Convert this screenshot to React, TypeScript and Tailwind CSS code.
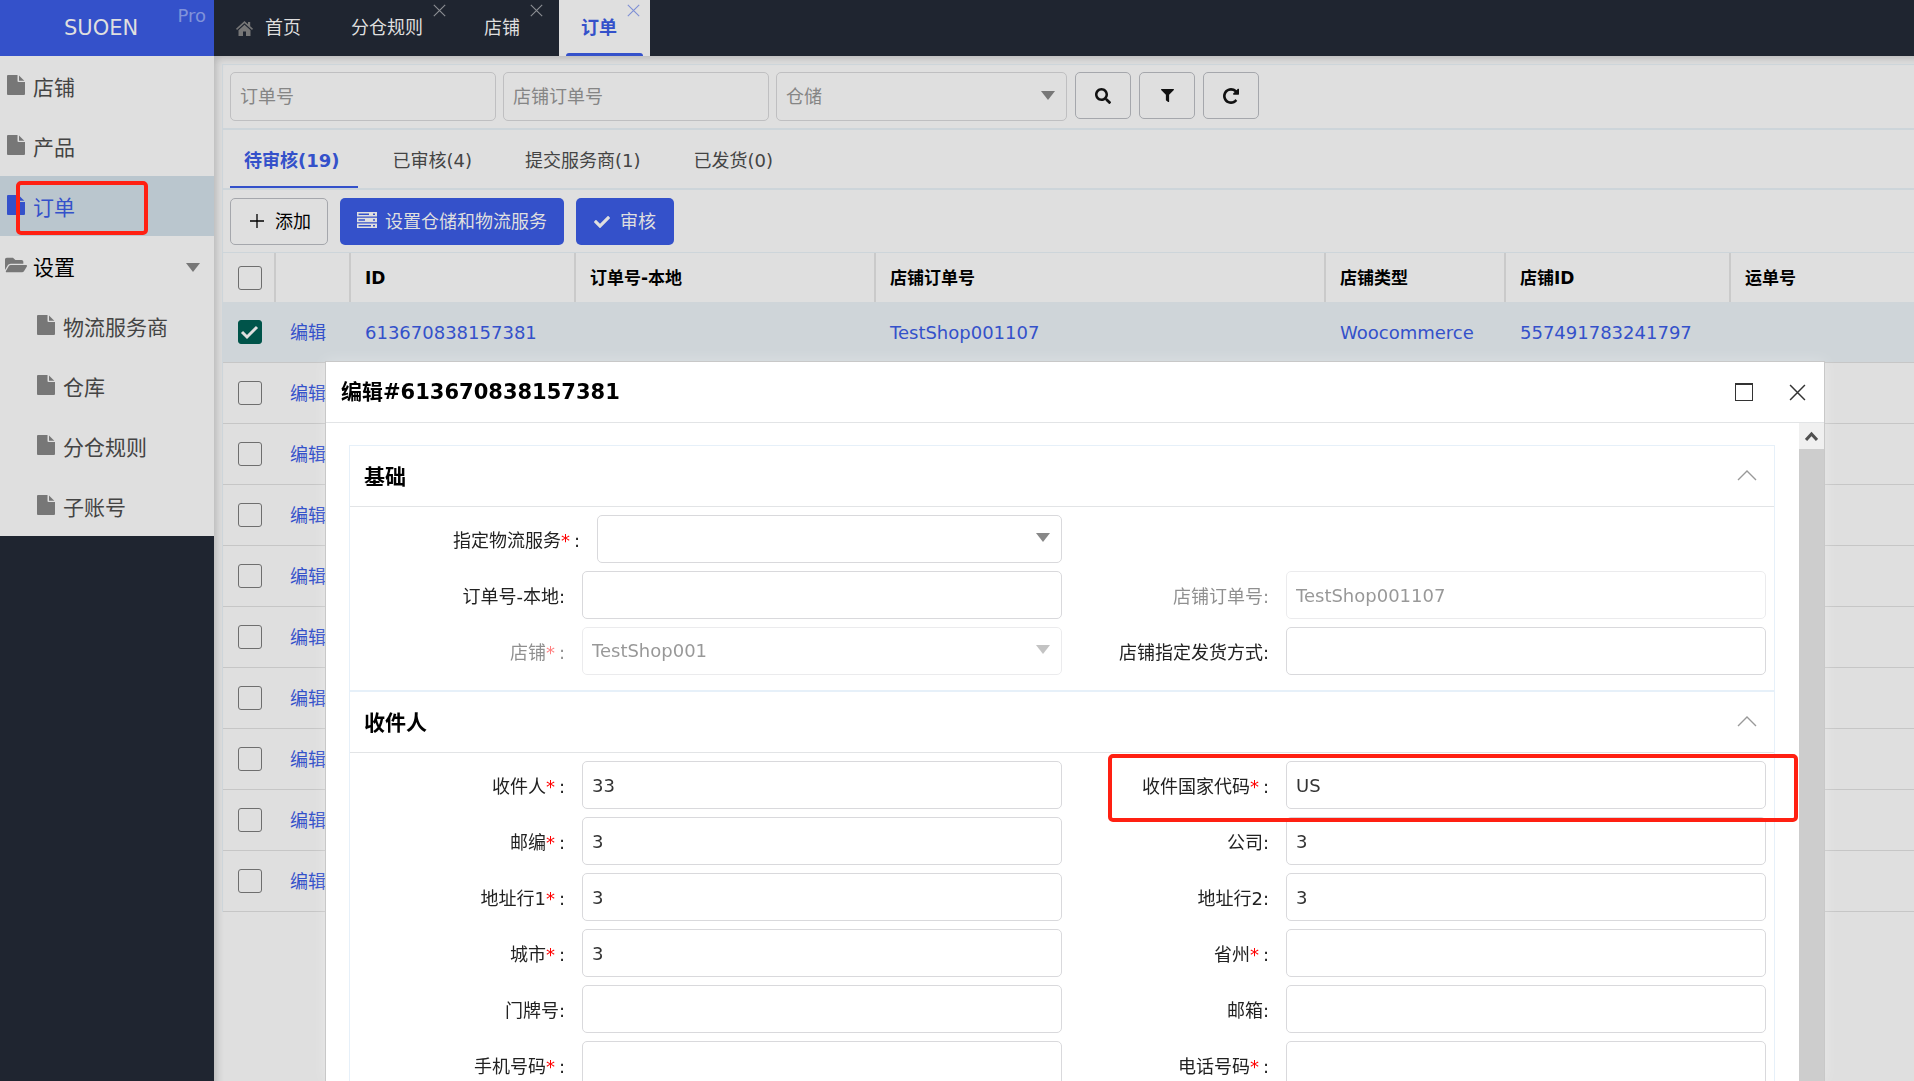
import React from "react";
import { FaFolderOpen, FaSearch, FaFilter, FaCheck } from "react-icons/fa";

const FileIcon = ({ className = "" }: { className?: string }) => (
  <svg viewBox="0 0 18 20" className={"h-5 w-[18px] shrink-0 " + className} fill="currentColor" aria-hidden="true">
    <path d="M1 0H10.500V6Q10.500 7 11.500 7H18V19Q18 20 17 20H1Q0 20 0 19V1Q0 0 1 0Z" />
    <path d="M12 0.500V5.800H17.300Z" />
  </svg>
);

const HomeIcon = () => (
  <svg viewBox="0 0 17 15" className="h-[15px] w-[17px] text-[#777]" fill="currentColor" aria-hidden="true">
    <path d="M8.500 0L12 3.200V1H14.200V5.200L17 7.800L16 9L8.500 2.200L1 9L0 7.800Z" />
    <path d="M8.500 3.700L14.500 9.200V15H10V10.500H7V15H2.500V9.200Z" />
  </svg>
);

const Caret = ({ className = "" }: { className?: string }) => (
  <svg viewBox="0 0 14 9" className={"h-[9px] w-[14px] " + className} fill="currentColor" aria-hidden="true">
    <path d="M0 0H14L7 9Z" />
  </svg>
);

const Cross = ({ className = "" }: { className?: string }) => (
  <svg viewBox="0 0 16 16" className={className} fill="none" stroke="currentColor" strokeWidth="1.4" aria-hidden="true">
    <path d="M1 1L15 15M15 1L1 15" />
  </svg>
);

const RepeatIcon = () => (
  <svg viewBox="0 0 1536 1536" className="h-4 w-4" fill="currentColor" aria-hidden="true">
    <path d="M1536 128v448q0 26-19 45t-45 19h-448q-42 0-59-40-17-39 14-69l138-138Q969 256 768 256q-104 0-198.500 40.500T406 406 296.500 569.500 256 768t40.500 198.500T406 1130t163.500 109.500T768 1280q119 0 225-52t179-147q7-10 23-12 15 0 25 9l137 138q9 8 9.500 20.500t-7.500 22.500q-109 132-264 204.500T768 1536q-156 0-298-61t-245-164-164-245T0 768t61-298 164-245T470 61 768 0q147 0 284.500 55.500T1297 212l130-129q29-31 70-14 39 17 39 59z" />
  </svg>
);

const ServerIcon = () => (
  <svg viewBox="0 0 20 16" className="mb-1 h-4 w-5" fill="currentColor" aria-hidden="true">
    <path fillRule="evenodd" d="M0 0H20V4.500H0ZM1.500 1.500V3H12V1.500ZM16 1.500V3H18V1.500ZM0 5.700H20V10.200H0ZM1.500 7.200V8.700H8V7.200ZM16 7.200V8.700H18V7.200ZM0 11.400H20V16H0ZM1.500 13V14.500H14V13ZM16 13V14.500H18V13Z" />
  </svg>
);

const navTabs = ["分仓规则", "店铺", "订单"];

function TopBar() {
  return (
    <header className="flex h-14 shrink-0 bg-[#1f2530] text-lg text-[#dfdfdf]">
      <div className="relative flex w-[214px] shrink-0 items-center bg-[#3451ca] pl-16 text-[21px]">
        SUOEN
        <span className="absolute right-2 top-0.5 text-lg text-[#8093da]">Pro</span>
      </div>
      <nav className="flex gap-1.5">
        <a href="#home" className="flex items-center gap-3 px-[22px]">
          <HomeIcon />
          首页
        </a>
        {navTabs.map((t) => {
          const active = t === "订单";
          return (
            <div
              key={t}
              className={
                "relative flex items-center pl-[22px] pr-[33px] " +
                (active ? "bg-[#dfdfdf] font-bold text-[#3451ca]" : "")
              }
            >
              <a href={"#" + t}>{t}</a>
              <button
                aria-label={"关闭" + t}
                className={"absolute right-2.5 top-1 " + (active ? "text-[#7f90d5]" : "text-[#8b8e93]")}
              >
                <Cross className="h-[13px] w-[13px]" />
              </button>
              {active && <span className="absolute inset-x-[7px] bottom-0 h-[3px] rounded-t-sm bg-[#3451ca]" />}
            </div>
          );
        })}
      </nav>
    </header>
  );
}

const topItems = ["店铺", "产品", "订单"];
const subItems = ["物流服务商", "仓库", "分仓规则", "子账号"];
const sideItem = "flex h-[60px] items-center pt-[3px] ";

function Sidebar() {
  return (
    <aside className="w-[214px] shrink-0 bg-[#1f2530]">
      <nav className="bg-[#dfdfdf] text-[21px] text-[#444]">
        {topItems.map((t) => (
          <a
            key={t}
            href={"#" + t}
            className={sideItem + "relative gap-2 pl-[7px] " + (t === "订单" ? "bg-[#bac6ce] text-[#3451ca]" : "")}
          >
            <FileIcon className={"mb-1.5 " + (t === "订单" ? "" : "text-[#777]")} />
            {t}
            {t === "订单" && (
              <span className="absolute left-4 top-[5px] h-[54px] w-[132px] rounded-[5px] border-4 border-[#ff2012]" />
            )}
          </a>
        ))}
        <a href="#settings" className={sideItem + "gap-[6px] pl-[5px] pr-3.5 text-black"}>
          <FaFolderOpen className="mb-1.5 h-[22px] w-[22px] text-[#777]" />
          <span className="grow">设置</span>
          <Caret className="text-[#777]" />
        </a>
        {subItems.map((t) => (
          <a key={t} href={"#" + t} className={sideItem + "gap-2 pl-[37px]"}>
            <FileIcon className="mb-1.5 text-[#777]" />
            {t}
          </a>
        ))}
      </nav>
    </aside>
  );
}

const filterButton =
  "flex h-[47px] w-14 items-center justify-center rounded-[5px] border border-[#a5a7ac] text-[#111]";
const filterInput =
  "h-[49px] rounded-[5px] border border-[#bfbfc1] bg-transparent px-[9px] placeholder:text-[#858585]";

function Filters() {
  return (
    <form className="flex gap-[7px] border-b-2 border-[#cdd5da] px-[7px] py-[7px]">
      <input aria-label="订单号" placeholder="订单号" className={filterInput + " w-[266px]"} />
      <input aria-label="店铺订单号" placeholder="店铺订单号" className={filterInput + " w-[266px]"} />
      <div className="relative">
        <select aria-label="仓储" className={filterInput + " w-[291px] appearance-none text-[#858585]"}>
          <option>仓储</option>
        </select>
        <Caret className="pointer-events-none absolute right-3 top-[19px] text-[#777]" />
      </div>
      <div className="flex gap-2 pl-px">
        <button type="button" aria-label="搜索" className={filterButton}>
          <FaSearch className="h-4 w-4" />
        </button>
        <button type="button" aria-label="筛选" className={filterButton}>
          <FaFilter className="h-[13px] w-[13px]" />
        </button>
        <button type="button" aria-label="刷新" className={filterButton}>
          <RepeatIcon />
        </button>
      </div>
    </form>
  );
}

const statusTabs = ["待审核(19)", "已审核(4)", "提交服务商(1)", "已发货(0)"];

function StatusTabs() {
  return (
    <div role="tablist" className="flex h-[60px] gap-[21px] border-b-2 border-[#cdd5da] px-[7px]">
      {statusTabs.map((t, i) => (
        <button
          key={t}
          role="tab"
          aria-selected={i === 0}
          className={
            "border-b-2 pl-3.5 pr-[18px] pt-1.5 " +
            (i === 0 ? "border-[#3451ca] font-bold text-[#3451ca]" : "border-transparent text-[#444]")
          }
        >
          {t}
        </button>
      ))}
    </div>
  );
}

const actionButton = "flex h-[47px] items-center rounded-[5px] ";

function Actions() {
  return (
    <div className="flex gap-3 border-b border-[#cdd5da] px-[7px] pb-[7px] pt-2">
      <button className={actionButton + "gap-2 border border-[#a5a7ac] px-4 text-black"}>
        <svg viewBox="0 0 20 20" className="mb-0.5 h-5 w-5" fill="none" stroke="currentColor" strokeWidth="1.300" aria-hidden="true">
          <path d="M3 10H17M10 3V17" />
        </svg>
        添加
      </button>
      <button className={actionButton + "gap-2 bg-[#3451ca] px-[17px] text-[#dfdfdf]"}>
        <ServerIcon />
        设置仓储和物流服务
      </button>
      <button className={actionButton + "gap-2.5 bg-[#3451ca] px-[18px] text-[#dfdfdf]"}>
        <FaCheck className="h-4 w-4" />
        审核
      </button>
    </div>
  );
}

const columns = ["ID", "订单号-本地", "店铺订单号", "店铺类型", "店铺ID", "运单号"];
const rows = [
  ["613670838157381", "", "TestShop001107", "Woocommerce", "557491783241797", ""],
  ...Array.from({ length: 9 }, () => ["", "", "", "", "", ""]),
];

const Tick = ({ label, checked = false }: { label: string; checked?: boolean }) => (
  <span className="relative mx-auto block h-6 w-6">
    <input
      type="checkbox"
      aria-label={label}
      defaultChecked={checked}
      className="block h-6 w-6 appearance-none rounded-[3px] border border-[#6e6e6e] checked:border-[#00544a] checked:bg-[#00544a]"
    />
    {checked && (
      <svg viewBox="0 0 24 24" className="pointer-events-none absolute inset-0" fill="none" stroke="#dfdfdf" strokeWidth="3" aria-hidden="true">
        <path d="M4 12L9 17L19 7" />
      </svg>
    )}
  </span>
);

function Orders() {
  return (
    <table className="w-full table-fixed border-separate border-spacing-0 text-left">
      <colgroup>
        <col className="w-[53px]" />
        <col className="w-[75px]" />
        <col className="w-[225px]" />
        <col className="w-[300px]" />
        <col className="w-[450px]" />
        <col className="w-[180px]" />
        <col className="w-[225px]" />
        <col />
      </colgroup>
      <thead>
        <tr className="h-[49px] text-[17px] text-black">
          <th className="border-r-2 border-[#cacaca] pl-0.5">
            <Tick label="全选" />
          </th>
          <th className="border-r-2 border-[#cacaca]" />
          {columns.map((c) => (
            <th key={c} className="border-r-2 border-[#cacaca] pl-3.5 last:border-r-0">
              {c}
            </th>
          ))}
        </tr>
      </thead>
      <tbody className="text-[#3451ca]">
        {rows.map((r, i) => (
          <tr key={i} className={"h-[61px] " + (i === 0 ? "bg-[#cfd5d9]" : "")}>
            <td className="border-b border-[#c6c6c6]">
              <Tick label={"选择第" + (i + 1) + "行"} checked={i === 0} />
            </td>
            <td className="border-b border-[#c6c6c6] pl-3.5 pt-0.5">
              <a href="#edit">编辑</a>
            </td>
            {r.map((c, j) => (
              <td key={j} className="border-b border-[#c6c6c6] pl-3.5 pt-0.5">
                {c}
              </td>
            ))}
          </tr>
        ))}
      </tbody>
    </table>
  );
}

type FieldData = {
  label: string;
  value?: string;
  required?: boolean;
  disabled?: boolean;
  select?: boolean;
  wide?: boolean;
  marked?: boolean;
};

function Field({ label, value = "", required, disabled, select, wide, marked }: FieldData) {
  const box = "h-12 w-full rounded-[5px] border border-[#d9d9dc] bg-white px-[9px] text-[#333]";
  return (
    <div className={"relative flex items-center " + (disabled ? "opacity-50 " : "") + (marked ? "z-10" : "")}>
      <label htmlFor={label} className={"shrink-0 pr-[17px] pt-[3px] text-right text-[#222] " + (wide ? "w-[239px]" : "w-56")}>
        {label}
        {required && <span className="mr-1 text-[#f00]">*</span>}:
      </label>
      {select ? (
        <div className="relative grow">
          <select id={label} disabled={disabled} className={box + " appearance-none opacity-100"}>
            <option>{value}</option>
          </select>
          <Caret className="pointer-events-none absolute right-3 top-[18px] text-[#888]" />
        </div>
      ) : (
        <input id={label} type="text" defaultValue={value} disabled={disabled} className={box} />
      )}
      {marked && (
        <span className="pointer-events-none absolute -right-8 -top-[7px] left-[46px] h-[68px] rounded-[5px] border-4 border-[#ff2012]" />
      )}
    </div>
  );
}

const basicFields: (FieldData | null)[] = [
  { label: "指定物流服务", required: true, select: true, wide: true },
  null,
  { label: "订单号-本地" },
  { label: "店铺订单号", value: "TestShop001107", disabled: true },
  { label: "店铺", value: "TestShop001", required: true, select: true, disabled: true },
  { label: "店铺指定发货方式" },
];

const recipientFields: FieldData[] = [
  { label: "收件人", value: "33", required: true },
  { label: "收件国家代码", value: "US", required: true, marked: true },
  { label: "邮编", value: "3", required: true },
  { label: "公司", value: "3" },
  { label: "地址行1", value: "3", required: true },
  { label: "地址行2", value: "3" },
  { label: "城市", value: "3", required: true },
  { label: "省州", required: true },
  { label: "门牌号" },
  { label: "邮箱" },
  { label: "手机号码", required: true },
  { label: "电话号码", required: true },
];

function Section({ title, fields }: { title: string; fields: (FieldData | null)[] }) {
  return (
    <section className="border-b-2 border-[#e6f0f9]">
      <div className="flex h-[61px] items-center justify-between border-b border-[#e2e4e6] pl-3.5 pr-[17px]">
        <h3 className="pt-0.5 text-[21px] font-bold text-black">{title}</h3>
        <button aria-label={"收起" + title} className="pb-0.5">
          <svg viewBox="0 0 20 11" className="h-[11px] w-5" fill="none" stroke="#999" strokeWidth="1.400" aria-hidden="true">
            <path d="M1 10L10 1L19 10" />
          </svg>
        </button>
      </div>
      <div className="grid grid-cols-2 gap-y-2 px-2 pb-[15px] pt-2">
        {fields.map((f, i) => (f ? <Field key={i} {...f} /> : <div key={i} />))}
      </div>
    </section>
  );
}

function EditDialog() {
  return (
    <div
      role="dialog"
      aria-labelledby="dialog-title"
      className="fixed bottom-0 left-[325px] right-[89px] top-[361px] flex flex-col border border-b-0 border-[#c8c8c8] bg-white shadow-[0_0_14px_rgba(255,255,255,0.3)]"
    >
      <div className="flex h-[61px] shrink-0 items-center border-b border-[#e2e4e6] pl-[15px] pr-[18px]">
        <h2 id="dialog-title" className="grow text-[21px] font-bold text-black">
          编辑#613670838157381
        </h2>
        <button aria-label="最大化" className="mr-9 h-[18px] w-[18px] border border-t-2 border-[#333]" />
        <button aria-label="关闭" className="text-[#333]">
          <Cross className="h-[17px] w-[17px]" />
        </button>
      </div>
      <div className="flex min-h-0 grow">
        <div className="grow overflow-hidden pl-[23px] pr-6 pt-[22px]">
          <div className="border border-[#e6f0f9]">
            <Section title="基础" fields={basicFields} />
            <Section title="收件人" fields={recipientFields} />
          </div>
        </div>
        <div className="w-[25px] shrink-0 bg-[#cdcdcd]">
          <div className="flex h-[26px] items-center justify-center bg-[#f0f0f0]">
            <svg viewBox="0 0 13 10" className="h-2.5 w-[13px]" fill="none" stroke="#505050" strokeWidth="3" aria-hidden="true">
              <path d="M1 9L6.500 3L12 9" />
            </svg>
          </div>
        </div>
      </div>
    </div>
  );
}

export default function App() {
  return (
    <div className="flex h-screen flex-col overflow-hidden bg-[#dfdfdf] font-['DejaVu_Sans','Noto_Sans_CJK_SC',sans-serif] text-lg leading-7">
      <TopBar />
      <div className="flex min-h-0 grow">
        <Sidebar />
        <main className="min-w-0 grow overflow-hidden pl-2 pt-2 shadow-[inset_8px_8px_8px_-6px_rgba(0,0,0,0.2)]">
          <div className="border-l border-t border-[#cdd5da]">
            <Filters />
            <StatusTabs />
            <Actions />
            <Orders />
          </div>
        </main>
      </div>
      <EditDialog />
    </div>
  );
}
